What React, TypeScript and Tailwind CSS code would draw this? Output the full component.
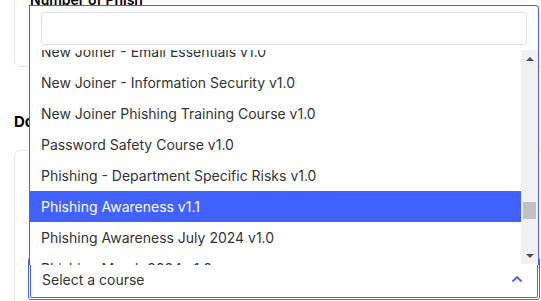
const courses = [
  "New Joiner - Email Essentials v1.0",
  "New Joiner - Information Security v1.0",
  "New Joiner Phishing Training Course v1.0",
  "Password Safety Course v1.0",
  "Phishing - Department Specific Risks v1.0",
  "Phishing Awareness v1.1",
  "Phishing Awareness July 2024 v1.0",
  "Phishing March 2024 v1.0",
];

const selected = "Phishing Awareness v1.1";

function ScrollBar() {
  return (
    <div className="flex flex-col w-[17px] h-[214px] bg-[#f1f1f1] shrink-0">
      <div className="h-[17px] flex items-center justify-center">
        <div className="w-0 h-0 border-l-[4px] border-r-[4px] border-b-[4px] border-l-transparent border-r-transparent border-b-[#505050]" />
      </div>
      <div className="flex-1 px-[2px] pt-[135px]">
        <div className="h-[17px] bg-[#c1c1c1]" />
      </div>
      <div className="h-[17px] flex items-center justify-center">
        <div className="w-0 h-0 border-l-[4px] border-r-[4px] border-t-[4px] border-l-transparent border-r-transparent border-t-[#505050]" />
      </div>
    </div>
  );
}

export default function App() {
  return (
    <div
      className="relative w-[541px] h-[301px] overflow-hidden bg-white text-[#2b2b2b]"
      style={{ fontFamily: "Inter, 'Noto Sans', sans-serif" }}
    >
      {/* page behind the open dropdown */}
      <div className="pl-[14px] w-[600px]">
        <div className="-mt-[20px] h-[87px] border border-[#e3e5ea] rounded-md px-[15px] pt-[10px]">
          <p className="text-[14px] font-semibold text-black leading-[17px]">Number of Phish</p>
        </div>
        <p className="mt-[47px] text-[15px] font-bold text-black leading-[16px]">Domain</p>
        <div className="mt-[20px] h-[200px] border border-[#e3e5ea] rounded-md pl-[13px] pt-[106px]">
          <div className="w-[512px] h-[43px] border border-[#4563f0] rounded-[3px] p-px">
            <div className="h-full border border-[#4563f0] rounded-[2px] flex items-center justify-between pl-[11px] pr-[14px]">
              <span className="text-[14px] text-[#333] pt-[2px]">Select a course</span>
              <svg width="12" height="8" viewBox="0 0 12 8" fill="none">
                <path d="M1.5 6.5 L6 2 L10.5 6.5" stroke="#4563f0" strokeWidth="1.8" />
              </svg>
            </div>
          </div>
        </div>
      </div>

      {/* dropdown panel */}
      <div className="absolute left-[29px] top-[5px] w-[510px] h-[260px] bg-white border border-b-0 border-[#4563f0] rounded-tr-[4px] flex flex-col">
        <div className="px-[11px] pt-[6px] pb-[5px]">
          <div className="h-[33px] border border-[#dcdfe4] rounded-[4px]" />
        </div>
        <div className="flex flex-1 min-h-0 items-start">
          <div className="flex-1 h-full overflow-hidden">
            <ul className="-mt-[14px]">
              {courses.map((c) => (
                <li
                  key={c}
                  className={
                    c === selected
                      ? "h-[31px] flex items-center pl-[11px] text-[14px] bg-[#4262ff] text-white"
                      : "h-[31px] flex items-center pl-[11px] text-[14px] text-[#333]"
                  }
                >
                  {c}
                </li>
              ))}
            </ul>
          </div>
          <ScrollBar />
        </div>
      </div>
    </div>
  );
}
